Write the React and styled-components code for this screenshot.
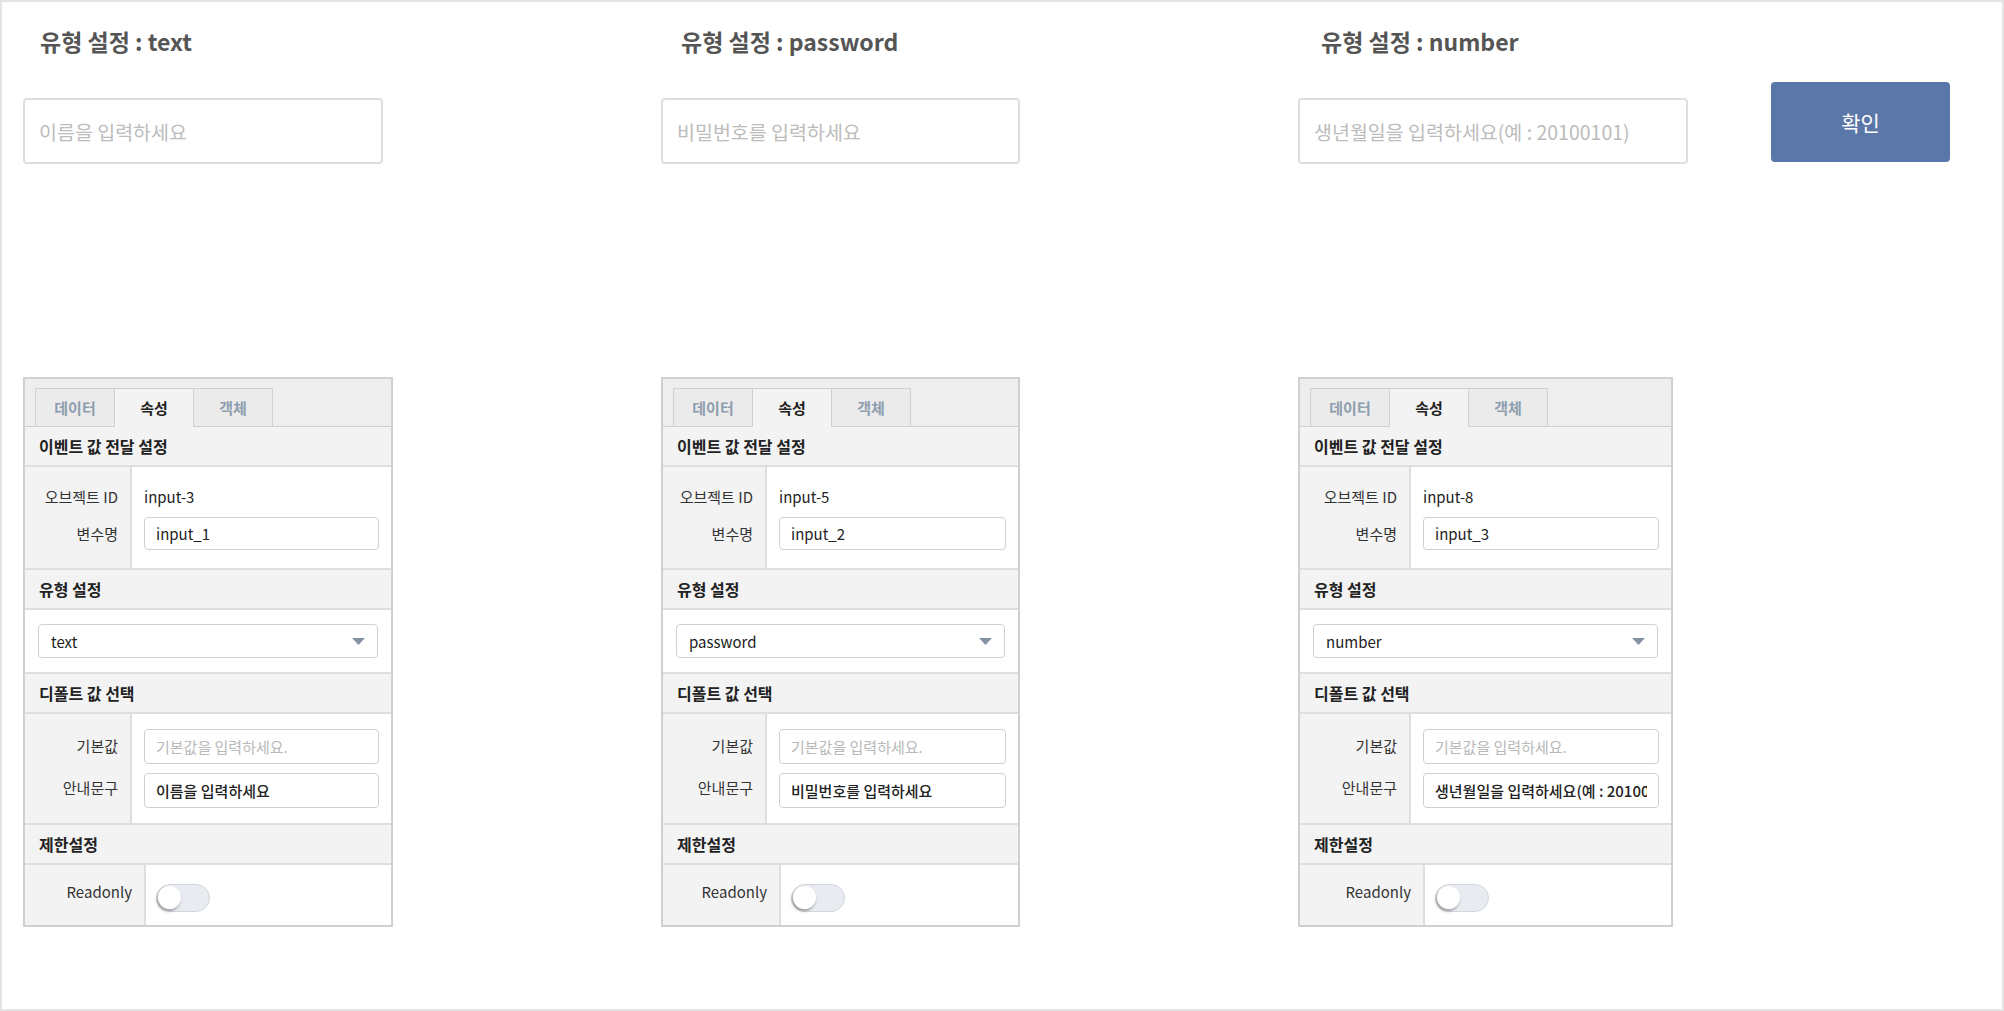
import React from "react";
import styled, { createGlobalStyle } from "styled-components";

const GlobalStyle = createGlobalStyle`
  body {
    margin: 0;
    font-family: "Noto Sans CJK KR", "Noto Sans", sans-serif;
    color: #222;
  }
  * { box-sizing: border-box; }
`;

const columns = [
  {
    type: "text",
    indent: 17,
    inputWidth: 360,
    placeholder: "이름을 입력하세요",
    panelWidth: 370,
    labelWidth: 107,
    limitWidth: 121,
    objectId: "input-3",
    varName: "input_1",
    guide: "이름을 입력하세요",
  },
  {
    type: "password",
    indent: 20,
    inputWidth: 359,
    placeholder: "비밀번호를 입력하세요",
    panelWidth: 359,
    labelWidth: 104,
    limitWidth: 118,
    objectId: "input-5",
    varName: "input_2",
    guide: "비밀번호를 입력하세요",
  },
  {
    type: "number",
    indent: 23,
    inputWidth: 390,
    placeholder: "생년월일을 입력하세요(예 : 20100101)",
    panelWidth: 375,
    labelWidth: 111,
    limitWidth: 125,
    objectId: "input-8",
    varName: "input_3",
    guide: "생년월일을 입력하세요(예 : 20100101)",
    withButton: true,
  },
];

const Frame = styled.div`
  width: 2004px;
  height: 1011px;
  border: 2px solid #e4e4e4;
  padding: 24px 0 0 21px;
  display: grid;
  grid-template-columns: 638px 637px 1fr;
  align-items: start;
`;

const Column = styled.section`
  display: flex;
  flex-direction: column;
`;

const Title = styled.h2`
  margin: 0;
  padding-left: ${(p) => p.$indent}px;
  font-size: 23px;
  line-height: 30px;
  font-weight: 700;
  color: #555;
`;

const InputRow = styled.div`
  margin-top: 26px;
  height: 82px;
  display: flex;
  align-items: flex-end;
  gap: 83px;
`;

const BigInput = styled.input`
  width: ${(p) => p.$width}px;
  height: 66px;
  border: 2px solid #dedede;
  border-radius: 4px;
  padding: 0 14px;
  font-family: inherit;
  font-size: 19.5px;
  color: #333;
  outline: none;
  &::placeholder {
    color: #bcbcbc;
  }
`;

const ConfirmButton = styled.button`
  width: 179px;
  height: 80px;
  margin-bottom: 2px;
  border: none;
  border-radius: 4px;
  background: #5b76a9;
  color: #fff;
  font-family: inherit;
  font-size: 21px;
`;

const Panel = styled.div`
  margin-top: 213px;
  width: ${(p) => p.$width}px;
  border: 2px solid #d0d0d0;
  background: #fff;
`;

const TabBar = styled.div`
  height: 48px;
  padding: 0 10px;
  display: flex;
  align-items: flex-end;
  background: #eeeeee;
  border-bottom: 1px solid #d0d0d0;
`;

const Tab = styled.div`
  width: 80px;
  height: 39px;
  margin-bottom: -1px;
  margin-left: -1px;
  &:first-child { margin-left: 0; }
  display: flex;
  align-items: center;
  justify-content: center;
  border: 1px solid #d0d0d0;
  border-bottom: 1px solid ${(p) => (p.$active ? "#f3f3f3" : "#d0d0d0")};
  background: ${(p) => (p.$active ? "#f3f3f3" : "#ebebeb")};
  color: ${(p) => (p.$active ? "#222" : "#8d9eae")};
  font-size: 15px;
  font-weight: 700;
`;

const SectionHeader = styled.div`
  height: 40px;
  padding: 0 14px;
  display: flex;
  align-items: center;
  background: #f3f3f3;
  border-bottom: 2px solid #dcdfe2;
  font-size: 16px;
  font-weight: 700;
  color: #222;
`;

const FieldBlock = styled.div`
  display: flex;
  border-bottom: ${(p) => (p.$last ? "none" : "2px solid #dcdfe2")};
`;

const LabelCol = styled.div`
  width: ${(p) => p.$width}px;
  flex-shrink: 0;
  padding: ${(p) => p.$pad};
  display: flex;
  flex-direction: column;
  gap: ${(p) => p.$gap}px;
  background: #f3f3f3;
  border-right: 2px solid #dcdfe2;
`;

const ValueCol = styled.div`
  flex: 1;
  min-width: 0;
  padding: ${(p) => p.$pad};
  display: flex;
  flex-direction: column;
  gap: ${(p) => p.$gap}px;
`;

const Label = styled.div`
  height: ${(p) => p.$h}px;
  padding-right: 12px;
  display: flex;
  align-items: center;
  justify-content: flex-end;
  font-size: 15px;
  color: #333;
  white-space: nowrap;
`;

const PlainValue = styled.div`
  height: ${(p) => p.$h}px;
  display: flex;
  align-items: center;
  font-size: 15px;
  color: #222;
`;

const SmallInput = styled.input`
  width: 100%;
  height: ${(p) => p.$h}px;
  border: 1.5px solid #cdd1d6;
  border-radius: 4px;
  padding: 0 11px;
  font-family: inherit;
  font-size: 15px;
  font-weight: ${(p) => (p.$strong ? 500 : 400)};
  color: #222;
  outline: none;
  &::placeholder {
    color: #b9b9b9;
    font-weight: 400;
  }
`;

const SelectBlock = styled.div`
  padding: 14px 13px;
  border-bottom: 2px solid #dcdfe2;
`;

const SelectBox = styled.div`
  height: 34px;
  padding: 0 12px;
  display: flex;
  align-items: center;
  justify-content: space-between;
  border: 1.5px solid #cdd1d6;
  border-radius: 4px;
  font-size: 15px;
  color: #222;
`;

const Toggle = styled.div`
  width: 54px;
  height: 28px;
  margin-top: 19px;
  border: 1.5px solid #d3d7dd;
  border-radius: 14px;
  background: #e8ebf0;
  position: relative;
`;

const Knob = styled.span`
  position: absolute;
  left: 1px;
  top: 1px;
  width: 23px;
  height: 23px;
  border-radius: 50%;
  background: #fff;
  box-shadow: -1px 2px 3px rgba(0, 0, 0, 0.35);
`;

const Caret = () => (
  <svg width="13" height="7" viewBox="0 0 13 7">
    <path d="M0 0h13L6.5 7z" fill="#8393a3" />
  </svg>
);

const PropertyPanel = ({ c }) => (
  <Panel $width={c.panelWidth}>
    <TabBar>
      <Tab>데이터</Tab>
      <Tab $active>속성</Tab>
      <Tab>객체</Tab>
    </TabBar>

    <SectionHeader>이벤트 값 전달 설정</SectionHeader>
    <FieldBlock>
      <LabelCol $width={c.labelWidth} $pad="18px 0 18px 0" $gap={10}>
        <Label $h={22}>오브젝트 ID</Label>
        <Label $h={33}>변수명</Label>
      </LabelCol>
      <ValueCol $pad="18px 12px 18px 12px" $gap={10}>
        <PlainValue $h={22}>{c.objectId}</PlainValue>
        <SmallInput $h={33} defaultValue={c.varName} />
      </ValueCol>
    </FieldBlock>

    <SectionHeader>유형 설정</SectionHeader>
    <SelectBlock>
      <SelectBox>
        {c.type}
        <Caret />
      </SelectBox>
    </SelectBlock>

    <SectionHeader>디폴트 값 선택</SectionHeader>
    <FieldBlock>
      <LabelCol $width={c.labelWidth} $pad="15px 0 15px 0" $gap={9}>
        <Label $h={33}>기본값</Label>
        <Label $h={33}>안내문구</Label>
      </LabelCol>
      <ValueCol $pad="15px 12px 15px 12px" $gap={9}>
        <SmallInput $h={35} placeholder="기본값을 입력하세요." />
        <SmallInput $h={35} $strong defaultValue={c.guide} />
      </ValueCol>
    </FieldBlock>

    <SectionHeader>제한설정</SectionHeader>
    <FieldBlock $last>
      <LabelCol $width={c.limitWidth} $pad="15px 0 23px 0" $gap={0}>
        <Label $h={22}>Readonly</Label>
      </LabelCol>
      <ValueCol $pad="0 0 0 10px" $gap={0}>
        <Toggle>
          <Knob />
        </Toggle>
      </ValueCol>
    </FieldBlock>
  </Panel>
);

export default function App() {
  return (
    <>
      <GlobalStyle />
      <Frame>
        {columns.map((c) => (
          <Column key={c.type}>
            <Title $indent={c.indent}>유형 설정 : {c.type}</Title>
            <InputRow>
              <BigInput $width={c.inputWidth} type={c.type} placeholder={c.placeholder} />
              {c.withButton && <ConfirmButton>확인</ConfirmButton>}
            </InputRow>
            <PropertyPanel c={c} />
          </Column>
        ))}
      </Frame>
    </>
  );
}
